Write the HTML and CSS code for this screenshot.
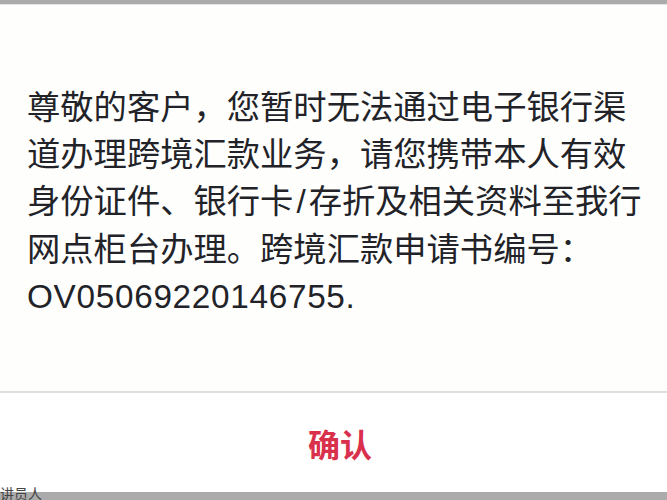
FILE: index.html
```html
<!DOCTYPE html>
<html lang="zh-CN">
<head>
<meta charset="utf-8">
<link rel="stylesheet" href="styles.css">
</head>
<body>
<div class="top-strip"></div>
<div class="dialog">
  <div class="message">
    <p class="msg-text">尊敬的客户，您暂时无法通过电子银行渠道办理跨境汇款业务，请您携带本人有效身份证件、银行卡<span class="slash">/</span>存折及相关资料至我行网点柜台办理。跨境汇款申请书编号：<span class="code">OV05069220146755.</span></p>
  </div>
  <div class="actions">
    <span class="confirm">确认</span>
  </div>
</div>
<div class="bottom-strip"><span class="peek">讲员人</span></div>
</body>
</html>
```

FILE: styles.css
```css
html, body {
  margin: 0;
  padding: 0;
}
body {
  width: 667px;
  height: 500px;
  overflow: hidden;
  display: flex;
  flex-direction: column;
  background: #fefefd;
  font-family: "Liberation Sans", "Noto Sans CJK SC", sans-serif;
}
.top-strip {
  height: 4px;
  background: #ababab;
  border-bottom: 1px solid #e4e4e4;
}
.dialog {
  flex: 1;
  display: flex;
  flex-direction: column;
  background: #fefefd;
}
.message {
  flex: 1;
  padding: 79px 20px 0 27px;
}
.msg-text {
  margin: 0;
  width: 624px;
  font-size: 33.3px;
  line-height: 47.2px;
  color: #222328;
}
.slash {
  margin: 0 3px;
}
.code {
  letter-spacing: 0.7px;
}
.actions {
  height: 99px;
  border-top: 2px solid #dedede;
  display: flex;
  align-items: center;
  justify-content: center;
  padding-left: 13px;
  background: #ffffff;
}
.confirm {
  font-family: "Noto Sans CJK SC", sans-serif;
  font-weight: 700;
  font-size: 32px;
  color: #d9304c;
  line-height: 1;
}
.bottom-strip {
  height: 8px;
  background: #ababab;
  position: relative;
}
.peek {
  position: absolute;
  left: 0;
  top: -6px;
  font-family: "Noto Sans CJK SC", sans-serif;
  font-size: 14px;
  line-height: 14px;
  color: #444;
}
```
